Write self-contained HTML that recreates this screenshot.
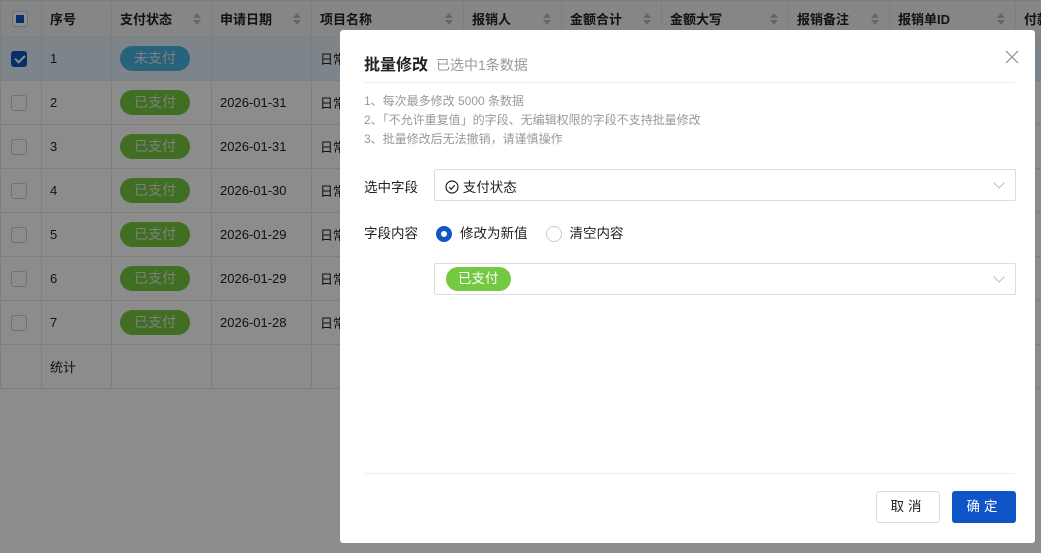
<!DOCTYPE html>
<html><head><meta charset="utf-8"><style>
*{box-sizing:border-box;margin:0;padding:0}
body{width:1041px;height:553px;overflow:hidden;position:relative;background:#fff;font-family:"Liberation Sans","Noto Sans CJK SC",sans-serif;font-size:13px;color:#222}
table{border-collapse:collapse;position:absolute;left:0;top:0;table-layout:fixed;width:1081px}
td,th{border:1px solid #e6e6e6;text-align:left;padding:0 0 0 8px;white-space:nowrap;overflow:hidden}
th{height:36px;background:#f3f4f6;font-weight:bold;font-size:13px;position:relative}
td{height:44px}
tr.hl td{background:#e4f0fb}
.sort{position:absolute;right:10px;top:12px;width:8px;height:12px}
.sort:before,.sort:after{content:"";position:absolute;left:0;border-left:4px solid transparent;border-right:4px solid transparent}
.sort:before{top:0;border-bottom:5px solid #bbb}.sort:after{bottom:0;border-top:5px solid #bbb}
.cb{width:16px;height:16px;border:1px solid #ccc;border-radius:3px;background:#fff;display:inline-block;vertical-align:middle;position:relative}
.cb.on{background:#0f55c8;border-color:#0f55c8}
.cb.on:after{content:"";position:absolute;left:5px;top:1px;width:4px;height:8px;border:solid #fff;border-width:0 2px 2px 0;transform:rotate(45deg)}
.cb.ind:after{content:"";position:absolute;left:3px;top:3px;width:8px;height:8px;background:#0f55c8}
.tag{display:inline-block;height:25px;line-height:25px;padding:0 14px;border-radius:13px;color:#e8e8e8;font-size:14px;background:#75c841}
.tag.b{background:#4ab4e6}
.mask{position:absolute;left:0;top:0;width:1041px;height:553px;background:rgba(0,0,0,.45)}
.dlg{position:absolute;left:340px;top:30px;width:695px;height:513px;background:#fff;border-radius:3px}
.title{position:absolute;left:24px;top:21px;font-size:16px;font-weight:bold;color:#222}
.sub{font-size:14px;color:#999;font-weight:normal;margin-left:8px}
.x{position:absolute;right:16px;top:20px;width:14px;height:14px}
.hr{position:absolute;left:24px;right:20px;height:1px;background:#eee}
.tips{position:absolute;left:24px;top:62px;font-size:12px;color:#999;line-height:19px}
.lab{position:absolute;left:24px;font-size:13.5px;color:#222}
.box{position:absolute;left:94px;width:582px;height:32px;border:1px solid #ddd;border-radius:2px}
.arr{position:absolute;right:12px;top:9px;width:8px;height:8px;border:solid #bbb;border-width:0 1px 1px 0;transform:rotate(45deg)}
.radio{display:inline-block;width:16px;height:16px;border-radius:50%;border:1px solid #ccc;vertical-align:middle;margin-right:8px;position:relative}
.radio.on{border:5px solid #0f55c8}
.btn{position:absolute;top:461px;height:32px;width:64px;border-radius:3px;font-size:13.5px;text-align:center;line-height:30px;letter-spacing:4px}
</style></head><body>
<table>
<colgroup><col style="width:41px"><col style="width:70px"><col style="width:100px"><col style="width:100px"><col style="width:152px"><col style="width:98px"><col style="width:100px"><col style="width:127px"><col style="width:101px"><col style="width:126px"><col style="width:66px"></colgroup>
<tr><th style="padding-left:11px"><span class="cb ind"></span></th><th>序号</th><th>支付状态<span class="sort"></span></th><th>申请日期<span class="sort"></span></th><th>项目名称<span class="sort"></span></th><th>报销人<span class="sort"></span></th><th>金额合计<span class="sort"></span></th><th>金额大写<span class="sort"></span></th><th>报销备注<span class="sort"></span></th><th>报销单ID<span class="sort"></span></th><th>付款</th></tr>
<tr class="hl"><td style="padding-left:10px"><span class="cb on"></span></td><td>1</td><td><span class="tag b">未支付</span></td><td></td><td>日常</td><td></td><td></td><td></td><td></td><td></td><td></td></tr>
<tr><td style="padding-left:10px"><span class="cb"></span></td><td>2</td><td><span class="tag">已支付</span></td><td>2026-01-31</td><td>日常</td><td></td><td></td><td></td><td></td><td></td><td></td></tr>
<tr><td style="padding-left:10px"><span class="cb"></span></td><td>3</td><td><span class="tag">已支付</span></td><td>2026-01-31</td><td>日常</td><td></td><td></td><td></td><td></td><td></td><td></td></tr>
<tr><td style="padding-left:10px"><span class="cb"></span></td><td>4</td><td><span class="tag">已支付</span></td><td>2026-01-30</td><td>日常</td><td></td><td></td><td></td><td></td><td></td><td></td></tr>
<tr><td style="padding-left:10px"><span class="cb"></span></td><td>5</td><td><span class="tag">已支付</span></td><td>2026-01-29</td><td>日常</td><td></td><td></td><td></td><td></td><td></td><td></td></tr>
<tr><td style="padding-left:10px"><span class="cb"></span></td><td>6</td><td><span class="tag">已支付</span></td><td>2026-01-29</td><td>日常</td><td></td><td></td><td></td><td></td><td></td><td></td></tr>
<tr><td style="padding-left:10px"><span class="cb"></span></td><td>7</td><td><span class="tag">已支付</span></td><td>2026-01-28</td><td>日常</td><td></td><td></td><td></td><td></td><td></td><td></td></tr>
<tr><td style="height:40px"></td><td>统计</td><td></td><td></td><td></td><td></td><td></td><td></td><td></td><td></td><td></td></tr>
</table>
<div class="mask"></div>
<div class="dlg">
<div class="title">批量修改<span class="sub">已选中1条数据</span></div>
<svg class="x" viewBox="0 0 14 14"><path d="M1 1L13 13M13 1L1 13" stroke="#999" stroke-width="1.3"/></svg>
<div class="hr" style="top:52px"></div>
<div class="tips">1、每次最多修改 5000 条数据<br>2、「不允许重复值」的字段、无编辑权限的字段不支持批量修改<br>3、批量修改后无法撤销，请谨慎操作</div>
<div class="lab" style="top:146px">选中字段</div>
<div class="box" style="top:139px"><span style="position:absolute;left:10px;top:6px;font-size:13.5px"><svg width="14" height="14" viewBox="0 0 14 14" style="vertical-align:-2px"><circle cx="7" cy="7" r="6" fill="none" stroke="#222" stroke-width="1.2"/><path d="M4.2 7.2l2 2 3.6-4" fill="none" stroke="#222" stroke-width="1.2"/></svg> 支付状态</span><span class="arr"></span></div>
<div class="lab" style="top:192px">字段内容</div>
<div style="position:absolute;left:96px;top:192px;font-size:13.5px"><span class="radio on"></span>修改为新值<span class="radio" style="margin-left:18px"></span>清空内容</div>
<div class="box" style="top:233px"><span class="tag" style="position:absolute;left:11px;top:3px;height:24px;line-height:24px;padding:0 12px;font-size:13.5px;color:#fff">已支付</span><span class="arr"></span></div>
<div class="hr" style="top:443px"></div>
<div class="btn" style="left:536px;border:1px solid #ddd;color:#222">取消</div>
<div class="btn" style="left:612px;background:#0f55c8;color:#fff;border:1px solid #0f55c8">确定</div>
</div>
</body></html>
